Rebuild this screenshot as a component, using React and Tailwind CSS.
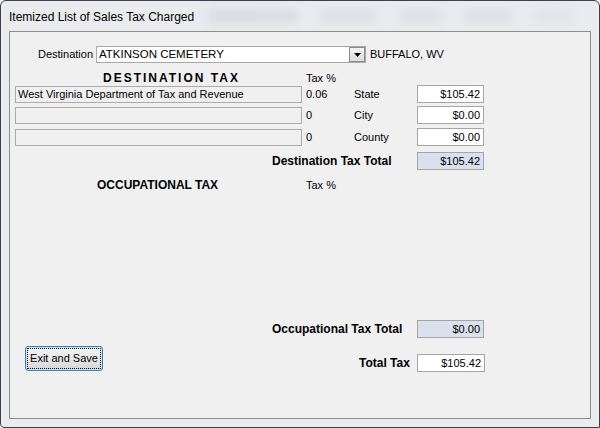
import React from 'react';

const money = 'h-[18px] w-[67px] border border-[#a5a5a5] flex items-center justify-end pr-[3px]';

function Blob({ className }) {
    return <div className={'rounded-sm blur-[4px] ' + className} />;
}

export default function App() {
    return (
        <div className="w-[600px] h-[428px] bg-[#e9ebee] border border-[#3f3f4c] rounded-t-[6px] rounded-bl-[4px] flex flex-col font-['Liberation_Sans',Arial,sans-serif] text-black overflow-hidden">
            {/* title bar (glass) */}
            <div className="h-[30px] flex items-center pl-[8px] gap-[14px] shrink-0">
                <span className="text-[12px] pt-[1px] whitespace-nowrap">Itemized List of Sales Tax Charged</span>
                <div className="flex items-center gap-[20px] opacity-40">
                    <Blob className="w-[90px] h-[14px] bg-[#c4c8d3]" />
                    <Blob className="w-[60px] h-[12px] bg-[#cbcfd9]" />
                    <Blob className="w-[45px] h-[12px] bg-[#cbcfd9]" />
                    <Blob className="w-[50px] h-[12px] bg-[#cbcfd9]" />
                    <Blob className="w-[40px] h-[12px] bg-[#d6d9e0]" />
                </div>
            </div>

            <div className="flex-1 px-[8px] pb-[8px] flex">
                <div className="flex-1 border border-[#8d8d8d] bg-[#f0f0f0] text-[11px] flex flex-col">
                    {/* destination row */}
                    <div className="flex items-center mt-[14px]">
                        <span className="ml-[28px] w-[58px]">Destination</span>
                        <div className="w-[270px] h-[17px] bg-white border border-[#a8a8a8] flex items-center pl-[2px]">
                            <span className="flex-1 text-[11.5px]">ATKINSON CEMETERY</span>
                            <div className="w-[16px] h-[15px] border border-[#8c8c8c] bg-gradient-to-b from-[#f4f4f4] to-[#dcdcdc] flex items-center justify-center">
                                <svg width="7" height="4" viewBox="0 0 7 4">
                                    <path d="M0 0h7L3.5 4z" fill="#000" />
                                </svg>
                            </div>
                        </div>
                        <span className="ml-[4px]">BUFFALO, WV</span>
                    </div>

                    {/* destination tax */}
                    <div className="grid grid-cols-[291px_48px_63px_67px] pl-[5px] mt-[6px] h-[14px] items-center">
                        <span className="pl-[88px] font-bold text-[12px] tracking-[2px] whitespace-nowrap">DESTINATION TAX</span>
                        <span>Tax %</span>
                    </div>

                    {[
                        ['West Virginia Department of Tax and Revenue', '0.06', 'State', '$105.42', 'mt-[2px]'],
                        ['', '0', 'City', '$0.00', 'mt-[3px]'],
                        ['', '0', 'County', '$0.00', 'mt-[4px]'],
                    ].map(([name, pct, label, amt, mt]) => (
                        <div key={label} className={'grid grid-cols-[291px_48px_63px_67px] pl-[5px] h-[18px] items-center ' + mt}>
                            <div className="w-[287px] h-[17px] border border-[#ababab] bg-[#f0f0f0] flex items-center pl-[2px]">
                                {name}
                            </div>
                            <span>{pct}</span>
                            <span>{label}</span>
                            <div className={money + ' bg-white'}>{amt}</div>
                        </div>
                    ))}

                    <div className="flex items-center mt-[6px] h-[18px]">
                        <span className="ml-[262px] w-[145px] font-bold text-[12px]">Destination Tax Total</span>
                        <div className={money + ' bg-[#d8e1ec]'}>$105.42</div>
                    </div>

                    {/* occupational tax */}
                    <div className="grid grid-cols-[291px_48px_63px_67px] pl-[5px] mt-[6px] h-[14px] items-center">
                        <span className="pl-[82px] font-bold text-[12px] whitespace-nowrap">OCCUPATIONAL TAX</span>
                        <span>Tax %</span>
                    </div>

                    <div className="flex items-center mt-[130px] h-[18px]">
                        <span className="ml-[262px] w-[145px] font-bold text-[12px]">Occupational Tax Total</span>
                        <div className={money + ' bg-[#d8e1ec]'}>$0.00</div>
                    </div>

                    <div className="flex items-start mt-[8px]">
                        <button className="ml-[15px] w-[78px] h-[25px] shrink-0 rounded-[3px] border border-[#3c7fb1] bg-gradient-to-b from-[#f2f2f2] via-[#e8e8e8] to-[#d4d4d4] p-[1px] shadow-[inset_0_0_0_1px_#bfe3f8]">
                            <span className="w-full h-full border border-dotted border-black flex items-center justify-center text-[11px] whitespace-nowrap">
                                Exit and Save
                            </span>
                        </button>
                        <div className="flex items-center mt-[8px] h-[18px]">
                            <span className="ml-[256px] w-[58px] font-bold text-[12px]">Total Tax</span>
                            <div className={money + ' bg-white w-[68px]'}>$105.42</div>
                        </div>
                    </div>
                </div>
            </div>
        </div>
    );
}
